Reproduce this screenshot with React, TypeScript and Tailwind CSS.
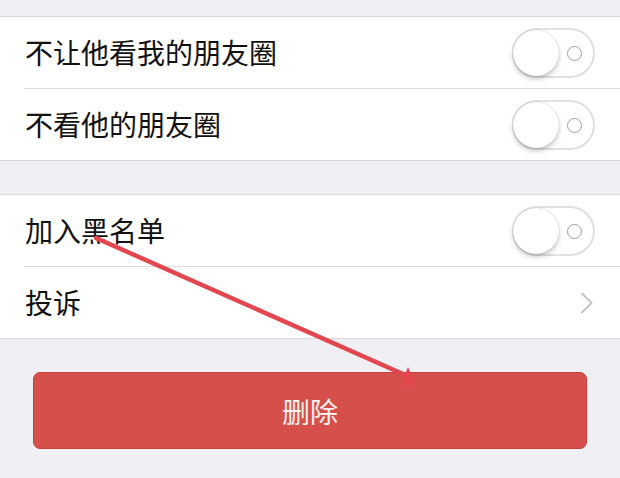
import React from "react";

function Toggle() {
  return (
    <div className="relative w-[83px] h-[50px] rounded-full border-2 border-[#e0e0e0] bg-white">
      <div className="absolute left-[-1px] top-[0px] w-[46px] h-[46px] rounded-full bg-white shadow-[0_3px_5px_rgba(0,0,0,0.22),0_0_1px_rgba(0,0,0,0.25)]" />
      <div className="absolute left-[53px] top-[16px] w-[15px] h-[15px] rounded-full border-[1.5px] border-[#9e9e9e]" />
    </div>
  );
}

function Chevron() {
  return (
    <svg width="14" height="22" viewBox="0 0 14 22" className="mr-[1px]">
      <polyline points="2,1.5 11.5,11 2,20.5" fill="none" stroke="#c4c4c9" strokeWidth="2" strokeLinecap="round" strokeLinejoin="round" />
    </svg>
  );
}

function Row({ label, right }: { label: string; right: React.ReactNode }) {
  return (
    <div className="h-[71px] flex items-center justify-between pl-[25px] pr-[25px]">
      <span className="text-[28px] leading-none text-[#111] -mt-[2px]">{label}</span>
      {right}
    </div>
  );
}

function Divider() {
  return <div className="h-[1px] ml-[24px] bg-[#dddddd]" />;
}

export default function App() {
  return (
    <div
      className="relative w-[620px] h-[478px] overflow-hidden bg-[#efeff4]"
      style={{ fontFamily: '"Noto Sans CJK SC", "Noto Sans", sans-serif' }}
    >
      <div className="pt-[16px]">
        <div className="bg-white border-y border-[#d8d8dc]">
          <Row label="不让他看我的朋友圈" right={<Toggle />} />
          <Divider />
          <Row label="不看他的朋友圈" right={<Toggle />} />
        </div>
        <div className="h-[33px]" />
        <div className="bg-white border-y border-[#d8d8dc]">
          <Row label="加入黑名单" right={<Toggle />} />
          <Divider />
          <Row label="投诉" right={<Chevron />} />
        </div>
        <div className="px-[33px] pt-[33px]">
          <button className="w-full h-[77px] rounded-[7px] bg-[#d6504b] border border-[#c2423d] flex items-center justify-center text-[28px] leading-none text-[#fdf1f0]">
            删除
          </button>
        </div>
      </div>
      <svg className="absolute left-0 top-0 pointer-events-none" width="620" height="478" viewBox="0 0 620 478">
        <line x1="96" y1="238" x2="403" y2="374" stroke="#e2464e" strokeWidth="4.5" strokeLinecap="round" />
        <polygon points="408,367 400,386 416,386" fill="#e2464e" />
      </svg>
    </div>
  );
}
